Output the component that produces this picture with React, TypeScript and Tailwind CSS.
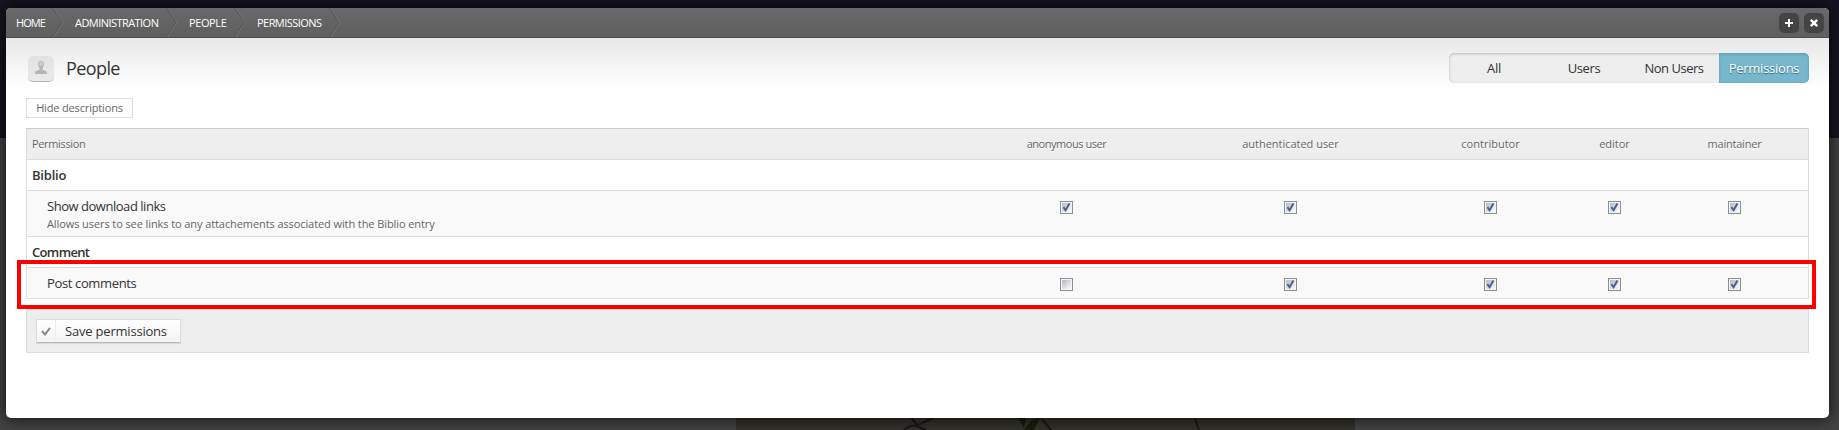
import React from "react";

const roles = [
  { name: "anonymous user", spacing: "tracking-[-0.45px]" },
  { name: "authenticated user", spacing: "tracking-[-0.02px]" },
  { name: "contributor", spacing: "tracking-[0px]" },
  { name: "editor", spacing: "tracking-[0px]" },
  { name: "maintainer", spacing: "tracking-[-0.22px]" },
];
const grid = "grid grid-cols-[938px_203px_245px_155px_93px_147px]";

const crumbs = [
  { label: "HOME", width: "w-[32px]", spacing: "tracking-[-0.95px]" },
  { label: "ADMINISTRATION", width: "w-[87px]", spacing: "tracking-[-0.55px]" },
  { label: "PEOPLE", width: "w-[41px]", spacing: "tracking-[-0.4px]" },
  { label: "PERMISSIONS", width: "w-[68px]", spacing: "tracking-[-0.55px]" },
];

function CrumbArrow() {
  return (
    <svg width="12" height="29" viewBox="0 0 12 29" fill="none" className="shrink-0">
      <path d="M0.5 0L10 14.5L0.5 29" stroke="#505050" />
      <path d="M1.5 0L11 14.5L1.5 29" stroke="#747474" />
    </svg>
  );
}

function Check({ on }: { on: boolean }) {
  return (
    <svg width="13" height="13" viewBox="0 0 13 13" className="block">
      <defs>
        <linearGradient id="well" x1="0" y1="0" x2="1" y2="1">
          <stop offset="0" stopColor="#b4b9c2" />
          <stop offset="0.9" stopColor="#f6f6f6" />
        </linearGradient>
      </defs>
      <rect x="0.5" y="0.5" width="12" height="12" fill="#f4f4f4" stroke="#8e8f8f" />
      <rect x="2" y="2" width="9" height="9" fill="url(#well)" />
      {on && <path d="M3.4 6.2L5.6 9.2L9.4 2.6" fill="none" stroke="#4a5f97" strokeWidth="2" />}
    </svg>
  );
}

interface RowProps {
  title: string;
  spacing: string;
  note?: string;
  values: boolean[];
  height: string;
}

function Row({ title, spacing, note, values, height }: RowProps) {
  return (
    <div className={`${grid} ${height} border-b border-[#dddddd] bg-[#f9f9f9]`}>
      <div className="pl-5 pt-[5px]">
        <div className={`${spacing} text-[13px] leading-[20px] text-[#333333]`}>{title}</div>
        {note && <div className="text-[11px] leading-[15px] tracking-[-0.09px] text-[#666666]">{note}</div>}
      </div>
      {values.map((v, i) => (
        <div key={i} className="flex justify-center pt-[10px]">
          <Check on={v} />
        </div>
      ))}
    </div>
  );
}

export default function App() {
  return (
    <div className="relative h-[430px] w-[1839px] overflow-hidden bg-[linear-gradient(#15131f_138px,#424242_138px)] pl-[6px] pr-[10px] pt-2 font-['Open_Sans','Noto_Sans',sans-serif]">
      <svg width="619" height="14" viewBox="0 0 619 14" className="absolute left-[736px] top-[416px]">
        <rect width="619" height="14" fill="#32312c" />
        <path d="M168 14Q175 8 180 10L197 2M182 10L174 0M180 10L190 14" stroke="#1b1412" strokeWidth="2" fill="none" />
        <path d="M282 2L290 2L288 12ZM288 14L296 4L304 2L298 14Z" fill="#171c0c" />
        <path d="M306 3L315 14M458 0L463 14" stroke="#1f1714" strokeWidth="2" />
      </svg>

      <div className="relative h-[410px] overflow-hidden rounded-[5px] bg-white shadow-[0_0_16px_#000000cc]">
        <header className="flex h-[30px] items-center border-b border-[#4d4d4d] bg-[linear-gradient(#686868,#5f5f5f)] pl-[10px] pr-[5px]">
          {crumbs.map((c) => (
            <div key={c.label} className="flex items-center">
              <span className={`${c.width} ${c.spacing} whitespace-nowrap pt-px text-[11px] text-white`}>{c.label}</span>
              <span className="flex w-[27px] pl-1">
                <CrumbArrow />
              </span>
            </div>
          ))}
          <div className="ml-auto flex gap-[5px]">
            <span className="flex size-5 items-center justify-center rounded-[5px] bg-[#444444]">
              <svg width="10" height="10" viewBox="0 0 10 10"><path d="M5 1V9M1 5H9" stroke="#fff" strokeWidth="2" /></svg>
            </span>
            <span className="flex size-5 items-center justify-center rounded-[5px] bg-[#444444]">
              <svg width="10" height="10" viewBox="0 0 10 10"><path d="M1.8 1.8L8.2 8.2M8.2 1.8L1.8 8.2" stroke="#fff" strokeWidth="2.4" /></svg>
            </span>
          </div>
        </header>

        <main className="bg-[linear-gradient(#e8e8e8,#ffffff_50px)] px-5 pt-[15px]">
          <div className="flex h-[30px] items-center">
            <span className="ml-[2px] mt-[2px] flex size-[26px] justify-center rounded-[5px] border-b border-[#b4b4b4] bg-[linear-gradient(#e2e2e2,#ebebeb)] pt-[5px]">
              <svg width="12" height="14" viewBox="0 0 12 14" className="shrink-0">
                <path d="M0 13V11.5Q0 10 4.5 8.7L4 6Q3 5 3 3Q3 0 6 0Q9 0 9 3Q9 5 8 6L7.5 8.7Q12 10 12 11.5V13Z" fill="#b5b5b5" />
                <ellipse cx="6" cy="3" rx="2" ry="2" fill="#cecece" />
              </svg>
            </span>
            <h1 className="ml-3 text-[18px] font-medium tracking-[-0.6px] text-[#333333]">People</h1>
            <nav className="ml-auto grid h-[30px] w-[360px] grid-cols-4 overflow-hidden rounded-[5px] bg-[#eeeeee] text-center text-[13px] leading-[30px] text-[#333333] shadow-[inset_0_1px_3px_#bbbbbb]">
              <span className="tracking-[-0.3px]">All</span>
              <span className="tracking-[-0.4px]">Users</span>
              <span className="tracking-[-0.5px]">Non Users</span>
              <span className="rounded-r-[5px] bg-[#77b7cb] tracking-[-0.25px] text-white shadow-[inset_0_1px_3px_#5a9cb2] [text-shadow:0_1px_1px_#30657a]">Permissions</span>
            </nav>
          </div>

          <button className="mt-[15px] block h-5 w-[107px] border border-[#dddddd] bg-white text-[11px] leading-[18px] tracking-[-0.16px] text-[#666666]">Hide descriptions</button>

          <div className="mt-[10px] border border-b-0 border-[#dddddd] border-t-[#cccccc]">
            <div className={`${grid} h-[31px] border-b border-[#dddddd] bg-[#eeeeee] text-center text-[11px] leading-[30px] text-[#666666] [text-shadow:0_1px_0_#ffffff]`}>
              <span className="pl-[5px] text-left tracking-[-0.35px]">Permission</span>
              {roles.map((r) => <span key={r.name} className={r.spacing}>{r.name}</span>)}
            </div>
            <div className="h-[31px] border-b border-[#dddddd] bg-white pl-[5px] text-[13px] font-semibold leading-[30px] tracking-[-0.2px] text-[#333333]">Biblio</div>
            <Row height="h-[46px]" title="Show download links" spacing="tracking-[-0.47px]" note="Allows users to see links to any attachements associated with the Biblio entry" values={[true, true, true, true, true]} />
            <div className="h-[31px] border-b border-[#dddddd] bg-white pl-[5px] text-[13px] font-semibold leading-[30px] tracking-[-0.65px] text-[#333333]">Comment</div>
            <Row height="h-[31px]" title="Post comments" spacing="tracking-[-0.36px]" values={[false, true, true, true, true]} />
          </div>

          <div className="mt-[10px] h-11 border border-[#dddddd] bg-[#eeeeee] pl-[9px] pt-[9px]">
            <button className="flex h-6 w-[145px] items-center border border-[#dddddd] border-b-[#bbbbbb] bg-[linear-gradient(#ffffff,#f3f3f3)] shadow-[0_1px_1px_#d9d9d9]">
              <span className="flex h-full w-[19px] items-center justify-center border-r border-[#eeeeee]">
                <svg width="10" height="9" viewBox="0 0 10 9"><path d="M1 4L4 7.5L9 0.8" fill="none" stroke="#888888" strokeWidth="2" /></svg>
              </span>
              <span className="ml-[9px] whitespace-nowrap pt-[2px] text-[13px] tracking-[-0.2px] text-[#333333]">Save permissions</span>
            </button>
          </div>
        </main>
      </div>

      <div className="absolute left-[17px] top-[260px] h-[49px] w-[1799px] border-4 border-[#ff0000]" />
    </div>
  );
}
